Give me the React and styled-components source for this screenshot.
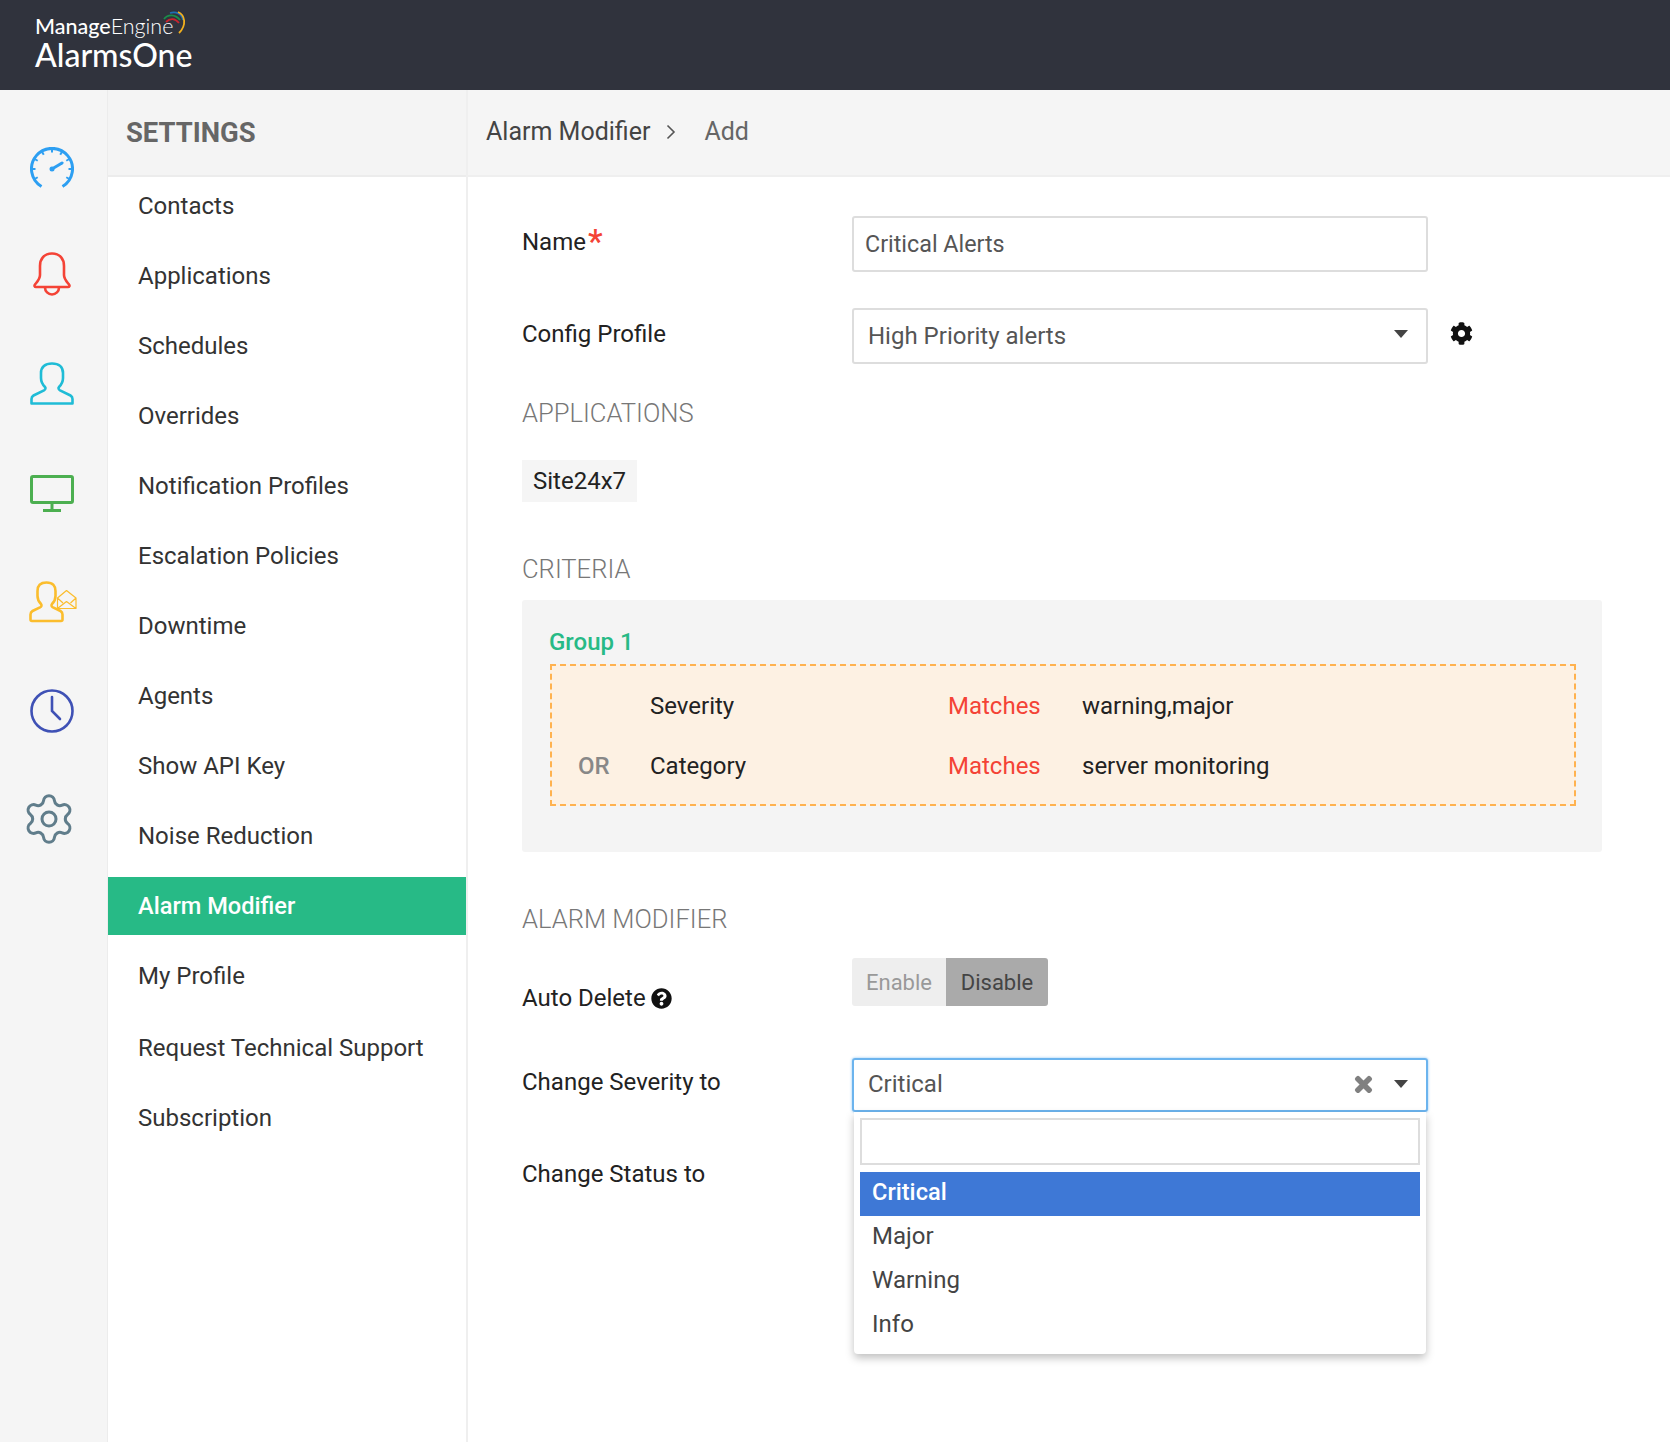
import React from 'react';
import styled, { createGlobalStyle } from 'styled-components';
import { Settings } from 'lucide-react';
import { FaCog, FaQuestionCircle, FaTimes } from 'react-icons/fa';

const GlobalStyle = createGlobalStyle`
  html, body {
    margin: 0;
    padding: 0;
    background: #fff;
  }
  body {
    font-family: Roboto, "Liberation Sans", sans-serif;
    color: #222;
  }
`;

const Page = styled.div`
  display: flex;
  flex-direction: column;
  min-height: 100vh;
`;
const TopBar = styled.header`
  height: 90px;
  flex: none;
  background: #30333d;
  padding: 14px 0 0 35px;
  box-sizing: border-box;
`;
const LogoLine = styled.div`
  position: relative;
  width: 150px;
  height: 24px;
  font-family: Lato, sans-serif;
  font-size: 21.5px;
  line-height: 24px;
  color: #fff;
  white-space: nowrap;
  b { font-weight: 500; }
  span { font-weight: 300; }
`;
const LogoArcs = styled.svg`
  position: absolute;
  left: 127px;
  top: -3px;
`;
const ProductName = styled.div`
  font-family: Lato, sans-serif;
  font-size: 32px;
  font-weight: 500;
  line-height: 34px;
  color: #fff;
`;
const Body = styled.div`
  flex: 1;
  display: flex;
`;
const Rail = styled.nav`
  width: 108px;
  flex: none;
  box-sizing: border-box;
  background: #f5f5f5;
  border-right: 1px solid #ececec;
  padding-top: 23px;
`;
const RailSlot = styled.div`
  height: 108.6px;
  box-sizing: border-box;
  display: flex;
  align-items: center;
  justify-content: center;
  padding-right: ${props => props.$pull || 4}px;
  padding-bottom: ${props => props.$up || 0}px;
  padding-top: ${props => props.$down || 0}px;
`;
const Side = styled.aside`
  width: 360px;
  flex: none;
  box-sizing: border-box;
  border-right: 2px solid #efefef;
`;
const SideTitle = styled.h2`
  margin: 0;
  height: 87px;
  box-sizing: border-box;
  background: #f4f4f4;
  border-bottom: 2px solid #ececec;
  padding: 28px 0 0 18px;
  font-size: 27.4px;
  line-height: 30px;
  font-weight: 700;
  color: #666;
`;
const SideList = styled.ul`
  list-style: none;
  margin: 0;
  padding: 0;
`;
const SideItem = styled.li`
  height: 58px;
  margin-top: ${props => (props.$active ? 1 : 0)}px;
  margin-bottom: ${props => props.$gap || 12}px;
  padding-left: 30px;
  display: flex;
  align-items: center;
  font-size: ${props => (props.$active ? 23.6 : 24)}px;
  font-weight: ${props => (props.$active ? 500 : 400)};
  color: ${props => (props.$active ? '#fff' : '#333')};
  background: ${props => (props.$active ? '#27ba86' : 'transparent')};
`;
const Main = styled.main`
  flex: 1;
  min-width: 0;
`;
const Crumbs = styled.div`
  height: 87px;
  box-sizing: border-box;
  background: #f5f5f5;
  border-bottom: 2px solid #efefef;
  padding: 26px 0 0 18px;
  display: flex;
  align-items: flex-start;
  font-size: 25px;
  line-height: 32px;
  color: #444;
`;
const CrumbArrow = styled.svg`
  margin: 8px 28px 0 16px;
`;
const CrumbLast = styled.span`
  color: #666;
`;
const Form = styled.div`
  padding: 39px 0 0 54px;
  width: 1080px;
`;
const Row = styled.div`
  display: flex;
  margin-top: ${props => props.$top || 0}px;
`;
const Label = styled.label`
  width: 330px;
  flex: none;
  padding-top: ${props => props.$pad || 9}px;
  font-size: 24px;
  line-height: 30px;
  color: #222;
  display: flex;
  align-items: flex-start;
`;
const Star = styled.span`
  color: #f44336;
  font-size: 33px;
  font-weight: 500;
  line-height: 30px;
  margin: 0 0 0 2px;
`;
const HelpIcon = styled(FaQuestionCircle)`
  font-size: 21px;
  margin: 5px 0 0 5px;
  color: #111;
`;
const Field = styled.div`
  position: relative;
  width: 576px;
  height: ${props => props.$h || 56}px;
  box-sizing: border-box;
  border: 2px solid ${props => (props.$focus ? '#6cb4ee' : '#ddd')};
  border-radius: 3px;
  box-shadow: ${props => (props.$focus ? '0 0 3px #8fc6f2' : 'none')};
  display: flex;
  align-items: center;
  padding: 0 ${props => (props.$select ? 18 : 11)}px ${props => (props.$focus ? 2 : 0)}px ${props => (props.$select ? 14 : 11)}px;
  font-size: ${props => (props.$select ? 24 : 23.3)}px;
  color: #555;
`;
const FieldText = styled.span`
  flex: 1;
`;
const Caret = styled.i`
  width: 0;
  height: 0;
  margin-top: ${props => (props.$up ? -5 : 0)}px;
  border-left: 7.5px solid transparent;
  border-right: 7.5px solid transparent;
  border-top: 8px solid #444;
`;
const ClearIcon = styled(FaTimes)`
  font-size: 23px;
  color: #808080;
  stroke: currentColor;
  stroke-width: 30;
  margin-right: 19px;
`;
const SideGear = styled(FaCog)`
  font-size: 23px;
  color: #111;
  margin: 14px 0 0 22px;
`;
const Heading = styled.h3`
  margin: ${props => props.$top}px 0 0;
  font-size: 25.6px;
  line-height: 30px;
  font-weight: 300;
  color: #777;
`;
const Chip = styled.div`
  display: inline-block;
  margin-top: 32px;
  height: 42px;
  line-height: 43px;
  padding: 0 11px;
  background: #f5f5f5;
  font-size: 24px;
  color: #222;
`;
const CriteriaPanel = styled.div`
  margin-top: 16px;
  background: #f4f4f4;
  border-radius: 3px;
  padding: 27px 26px 46px 28px;
`;
const GroupName = styled.div`
  margin-left: -1px;
  font-size: 24px;
  line-height: 30px;
  font-weight: 500;
  color: #27ba86;
`;
const GroupBox = styled.div`
  margin-top: 7px;
  height: 142px;
  box-sizing: border-box;
  border: 2px dashed #ffb24f;
  background: #fdf1e3;
  padding-top: 10px;
`;
const RuleRow = styled.div`
  display: grid;
  grid-template-columns: 26px 72px 298px 134px 1fr;
  height: 60px;
  align-items: center;
  font-size: 24px;
  color: #222;
`;
const RuleOr = styled.span`
  grid-column: 2;
  font-weight: 500;
  color: #888;
`;
const RuleField = styled.span`
  grid-column: 3;
`;
const RuleOp = styled.span`
  color: #f44336;
`;
const Toggle = styled.div`
  display: flex;
  height: 48px;
  border-radius: 3px;
  overflow: hidden;
  font-size: 22px;
`;
const ToggleOption = styled.div`
  width: ${props => props.$w}px;
  display: flex;
  align-items: center;
  justify-content: center;
  background: ${props => (props.$on ? '#aaa' : '#eee')};
  color: ${props => (props.$on ? '#444' : '#999')};
`;
const Menu = styled.div`
  position: absolute;
  left: 0;
  right: 0;
  top: 52px;
  z-index: 5;
  height: 242px;
  box-sizing: border-box;
  background: #fff;
  border-radius: 0 0 4px 4px;
  box-shadow: 0 4px 8px rgba(0, 0, 0, 0.25);
  padding: 6px 6px 0 6px;
`;
const MenuSearch = styled.div`
  height: 47px;
  box-sizing: border-box;
  border: 2px solid #ddd;
  margin-bottom: 7px;
`;
const MenuOption = styled.div`
  height: 44px;
  box-sizing: border-box;
  padding: 0 0 4px 12px;
  display: flex;
  align-items: center;
  font-size: ${props => (props.$active ? 23.6 : 24)}px;
  font-weight: ${props => (props.$active ? 500 : 400)};
  color: ${props => (props.$active ? '#fff' : '#444')};
  background: ${props => (props.$active ? '#3e78d6' : 'transparent')};
`;

const GaugeIcon = () => (
  <svg width="44" height="41" viewBox="0 0 44 41" fill="none" stroke="#2d9ff2" strokeWidth="3">
    <path d="M11.5 39.5A20.5 20.5 0 1 1 32.5 39.5" />
    {[-120, -90, -60, -30, 0, 30, 60, 90, 120].map(a => (
      <line
        key={a}
        x1={22 + 20 * Math.sin((a * Math.PI) / 180)}
        y1={22 - 20 * Math.cos((a * Math.PI) / 180)}
        x2={22 + 16.5 * Math.sin((a * Math.PI) / 180)}
        y2={22 - 16.5 * Math.cos((a * Math.PI) / 180)}
        strokeWidth="2"
      />
    ))}
    <path d="M22 22L32 16" strokeLinecap="round" />
    <circle cx="22" cy="22" r="2.5" fill="#2d9ff2" stroke="none" />
  </svg>
);

const BellIcon = () => (
  <svg width="38" height="44" viewBox="0 0 38 44" fill="none" stroke="#f44336" strokeWidth="2.6" strokeLinejoin="round">
    <path d="M19 1.5C11 1.5 7 7 7 14V23C7 27 4 30 2 32.5C1 33.8 1.6 35 3 35H35C36.4 35 37 33.8 36 32.5C34 30 31 27 31 23V14C31 7 27 1.5 19 1.5Z" />
    <path d="M12 35.5A7 7 0 0 0 26 35.5" />
  </svg>
);

const personPath =
  'M22 1.5C15 1.5 11 5 11 11V16C11 20 13 23 15 25C16 26 15.5 27.5 14 28.3L3.5 33.5C2 34.3 1.5 35.5 1.5 37V41.5H42.5V37C42.5 35.5 42 34.3 40.5 33.5L30 28.3C28.5 27.5 28 26 29 25C31 23 33 20 33 16V11C33 5 29 1.5 22 1.5Z';

const PersonIcon = () => (
  <svg width="44" height="44" viewBox="0 0 44 44" fill="none" stroke="#1fbcd6" strokeWidth="2.6" strokeLinejoin="round">
    <path d={personPath} />
  </svg>
);

const MonitorIcon = () => (
  <svg width="44" height="37" viewBox="0 0 44 37" fill="none" stroke="#4caf50" strokeWidth="3">
    <rect x="1.5" y="1.5" width="41" height="26" rx="1.5" />
    <path d="M22 27.5V35M13 35.5H31" />
  </svg>
);

const PersonMailIcon = () => (
  <svg width="48" height="42" viewBox="0 0 48 42" fill="none" stroke="#fbbd2d" strokeLinejoin="round">
    <path
      strokeWidth="2.6"
      d="M17.5 1.5C11 1.5 8.5 5 8.5 10V15C8.5 18.5 10 21 12 23C13 24.3 12.5 25.5 11 26.4L3.5 30C2 30.8 1.5 32 1.5 33.5V38.5C1.5 39.5 2 40 3 40H32C33 40 33.5 39.5 33.5 38.5V33.5C33.5 32 33 30.8 31.5 30L24 26.4C22.5 25.5 22 24.3 23 23C25 21 26.5 18.5 26.5 15V10C26.5 5 24 1.5 17.5 1.5Z"
    />
    <path strokeWidth="1.2" d="M28.5 17L37.5 9.5L47 17V27.5H28.5ZM28.5 17L34 22M47 17L41.5 22M28.5 27.5L37.5 20.5L47 27.5" />
  </svg>
);

const ClockIcon = () => (
  <svg width="44" height="44" viewBox="0 0 44 44" fill="none" stroke="#3f51b5" strokeWidth="2.6" strokeLinecap="round">
    <circle cx="22" cy="22" r="20.5" />
    <path d="M22 8V22L30 30" />
  </svg>
);

const railIcons = [
  { icon: <GaugeIcon /> },
  { icon: <BellIcon />, up: 4 },
  { icon: <PersonIcon /> },
  { icon: <MonitorIcon /> },
  { icon: <PersonMailIcon />, pull: 2 },
  { icon: <ClockIcon />, down: 2 },
  { icon: <Settings size={56} strokeWidth={1.3} color="#607d8b" />, pull: 9 },
];

const menuLinks = [
  'Contacts',
  'Applications',
  'Schedules',
  'Overrides',
  'Notification Profiles',
  'Escalation Policies',
  'Downtime',
  'Agents',
  'Show API Key',
  'Noise Reduction',
  'Alarm Modifier',
  'My Profile',
  'Request Technical Support',
  'Subscription',
];

const App = () => (
  <Page>
    <GlobalStyle />
    <TopBar>
      <LogoLine>
        <b>Manage</b><span>Engine</span>
        <LogoArcs width="26" height="26" viewBox="0 0 26 26" fill="none" strokeWidth="1.8">
          <path d="M2 8C6 3 13 3 18 9" stroke="#1a8f4a" />
          <path d="M4 11C8 7 13 7 17 12" stroke="#c8242f" />
          <path d="M8 2C14 0 20 3 21 9" stroke="#1c6fb5" />
          <path d="M16 1C23 4 25 14 17 22" stroke="#f2b01e" />
        </LogoArcs>
      </LogoLine>
      <ProductName>AlarmsOne</ProductName>
    </TopBar>
    <Body>
      <Rail>
        {railIcons.map((r, i) => (
          <RailSlot key={i} $pull={r.pull} $up={r.up} $down={r.down}>{r.icon}</RailSlot>
        ))}
      </Rail>
      <Side>
        <SideTitle>SETTINGS</SideTitle>
        <SideList>
          {menuLinks.map(name => (
            <SideItem key={name} $active={name === 'Alarm Modifier'} $gap={name === 'My Profile' ? 14 : 12}>{name}</SideItem>
          ))}
        </SideList>
      </Side>
      <Main>
        <Crumbs>
          Alarm Modifier
          <CrumbArrow width="10" height="16" viewBox="0 0 10 16" fill="none" stroke="#555" strokeWidth="1.6">
            <path d="M1.5 1.5L8 8L1.5 14.5" />
          </CrumbArrow>
          <CrumbLast>Add</CrumbLast>
        </Crumbs>
        <Form>
          <Row>
            <Label $pad={11}>Name<Star>*</Star></Label>
            <Field>Critical Alerts</Field>
          </Row>
          <Row $top={36}>
            <Label $pad={11}>Config Profile</Label>
            <Field $select>
              <FieldText>High Priority alerts</FieldText>
              <Caret $up />
            </Field>
            <SideGear />
          </Row>
          <Heading $top={34}>APPLICATIONS</Heading>
          <Chip>Site24x7</Chip>
          <Heading $top={52}>CRITERIA</Heading>
          <CriteriaPanel>
            <GroupName>Group 1</GroupName>
            <GroupBox>
              <RuleRow>
                <RuleField>Severity</RuleField>
                <RuleOp>Matches</RuleOp>
                <span>warning,major</span>
              </RuleRow>
              <RuleRow>
                <RuleOr>OR</RuleOr>
                <RuleField>Category</RuleField>
                <RuleOp>Matches</RuleOp>
                <span>server monitoring</span>
              </RuleRow>
            </GroupBox>
          </CriteriaPanel>
          <Heading $top={52}>ALARM MODIFIER</Heading>
          <Row $top={24}>
            <Label $pad={25}>Auto Delete<HelpIcon /></Label>
            <Toggle>
              <ToggleOption $w={94}>Enable</ToggleOption>
              <ToggleOption $w={102} $on>Disable</ToggleOption>
            </Toggle>
          </Row>
          <Row $top={45}>
            <Label>Change Severity to</Label>
            <Field $select $focus $h={54}>
              <FieldText>Critical</FieldText>
              <ClearIcon />
              <Caret />
              <Menu>
                <MenuSearch />
                <MenuOption $active>Critical</MenuOption>
                <MenuOption>Major</MenuOption>
                <MenuOption>Warning</MenuOption>
                <MenuOption>Info</MenuOption>
              </Menu>
            </Field>
          </Row>
          <Row $top={38}>
            <Label>Change Status to</Label>
          </Row>
        </Form>
      </Main>
    </Body>
  </Page>
);

export default App;
